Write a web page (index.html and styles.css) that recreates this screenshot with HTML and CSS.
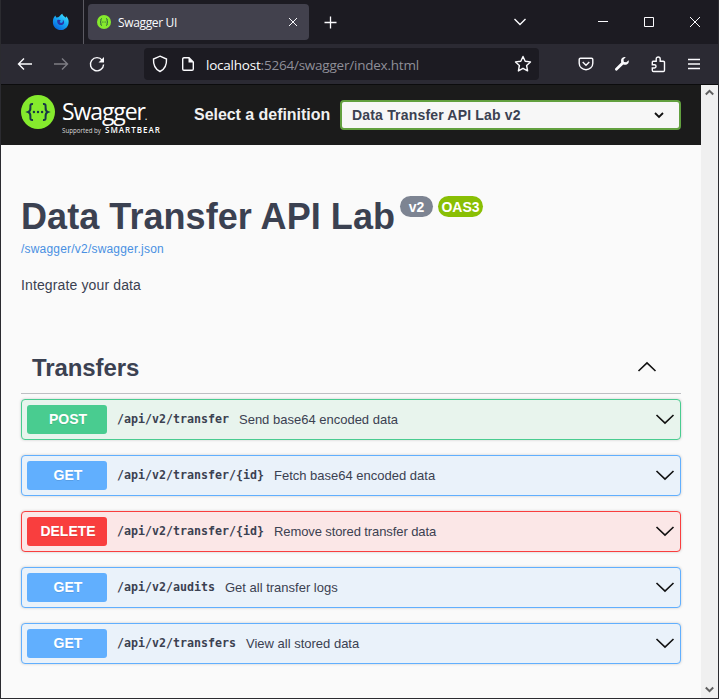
FILE: index.html
```html
<!DOCTYPE html>
<html lang="en">
<head>
<meta charset="utf-8">
<title>Swagger UI</title>
<link rel="stylesheet" href="styles.css">
</head>
<body>
<div class="window">
  <header class="tabbar">
    <svg class="firefox" viewBox="0 0 18 18">
      <defs><linearGradient id="fx" x1="0.9" y1="0" x2="0.2" y2="1"><stop offset="0" stop-color="#45e8ff"/><stop offset="0.5" stop-color="#16a6f5"/><stop offset="1" stop-color="#0560dc"/></linearGradient></defs>
      <path d="M2 4.200 3.300 2.500 4.300 4.500 6.200 4.300C8 3.500 8.400 1.500 10.300.7 10.600 2.500 12.700 3.300 13.500 4.700L14.300 3.300C16.500 5.500 17 8 16.500 10.400 15.700 14.500 12.500 17 8.800 17 4.500 17 1 13.700.9 9.400.8 7.300 1.200 5.500 2 4.200Z" fill="url(#fx)"/>
      <path d="M5.200 7.200C6.500 6.600 8 6.800 8.900 7.700 7.800 8 7.400 8.700 8 9.500 9.200 10.500 11.500 9.700 10.800 6.700 13.200 8.800 12 12.300 8.800 12.100 6.500 12 4.800 9.800 5.200 7.200Z" fill="#2a35a8"/>
    </svg>
    <span class="divider"></span>
    <div class="tab">
      <svg class="favicon" viewBox="0 0 34 34"><use href="#swagger-mark"/></svg>
      <span class="tab-title">Swagger UI</span>
      <svg class="tab-close" viewBox="0 0 10 10"><path d="M1 1 9 9M9 1 1 9"/></svg>
    </div>
    <svg class="new-tab" viewBox="0 0 13 13"><path d="M6.500.5V12.500M.5 6.500H12.500"/></svg>
    <svg class="list-tabs" viewBox="0 0 12 8"><path d="M.5 1 6 6.500 11.500 1"/></svg>
    <svg class="win-btn minimize" viewBox="0 0 10 10"><path d="M0 4.500H10"/></svg>
    <svg class="win-btn maximize" viewBox="0 0 10 10"><path d="M.5.5H9.500V9.500H.5Z"/></svg>
    <svg class="win-btn close" viewBox="0 0 10 10"><path d="M0 0 10 10M10 0 0 10"/></svg>
  </header>

  <nav class="toolbar">
    <svg class="nav-icon" viewBox="0 0 16 16"><path d="M15 8H1.500M7 2.500 1.500 8 7 13.500"/></svg>
    <svg class="nav-icon disabled" viewBox="0 0 16 16"><path d="M1 8H14.500M9 2.500 14.500 8 9 13.500"/></svg>
    <svg class="nav-icon" viewBox="0 0 16 16"><path d="M13.300 4.300A6.600 6.600 0 1 0 14.600 8.500"/><path class="solid" d="M15 1V6.500H9.500Z"/></svg>
    <div class="urlbar">
      <svg class="shield" viewBox="0 0 16 18"><path d="M8 1.200 14.500 4C14.800 9.500 12.800 14.300 8 16.500 3.200 14.300 1.200 9.500 1.500 4Z"/></svg>
      <svg class="doc" viewBox="0 0 14 16"><path d="M3 1.700H8L12.300 6V13A1.300 1.300 0 0 1 11 14.300H3A1.300 1.300 0 0 1 1.700 13V3A1.300 1.300 0 0 1 3 1.700Z"/><path class="solid" d="M7.500 1.500V6.500H12.500Z"/></svg>
      <span class="url"><b>localhost</b>:5264/swagger/index.html</span>
      <svg class="star" viewBox="0 0 18 18"><path d="M9 1.500 11.200 6.300 16.500 6.900 12.600 10.500 13.600 15.900 9 13.300 4.400 15.900 5.400 10.500 1.500 6.900 6.800 6.300Z"/></svg>
    </div>
    <svg class="tool-icon" viewBox="0 0 16 16"><path d="M2.500 2.200H13.500A1.300 1.300 0 0 1 14.800 3.500V7.200A6.800 6.600 0 0 1 1.200 7.200V3.500A1.300 1.300 0 0 1 2.500 2.200ZM4.700 6 8 9.200 11.300 6"/></svg>
    <svg class="tool-icon" viewBox="0 0 16 16"><path class="wrench" d="M14.700 4.200 12.300 6.300 9.900 5.900 9.500 3.600 11.700 1.200C9.600.6 7 2 7 4.700L7.200 6.500 1.200 12.600C.3 13.600 1.900 15.300 3 14.500L9.300 8.500C12.700 9.600 15.400 7.500 14.700 4.200Z"/></svg>
    <svg class="tool-icon" viewBox="0 0 16 16"><path d="M3 5.200H6.200V3A2 2 0 0 1 10.200 3V5.200H13.300A1.200 1.200 0 0 1 14.500 6.400V14.300A1.200 1.200 0 0 1 13.300 15.500H3.500A1.200 1.200 0 0 1 2.300 14.300V12H4.400A1.600 1.600 0 0 0 4.400 8.700H2.300V6Z"/></svg>
    <svg class="tool-icon" viewBox="0 0 16 16"><path d="M2 3.500H14M2 8H14M2 12.500H14"/></svg>
  </nav>

  <div class="viewport">
    <main class="page">
      <div class="topbar">
        <div class="logo">
          <svg class="mark" viewBox="0 0 34 34">
            <g id="swagger-mark">
              <circle cx="17" cy="17" r="17" fill="#85ea2d"/>
              <path d="M12 9C9.200 8.700 9.300 10.200 9.400 12.500 9.500 15 9.300 16.300 7.300 17 9.300 17.700 9.500 19 9.400 21.500 9.300 23.800 9.200 25.300 12 25M22 9C24.800 8.700 24.700 10.200 24.600 12.500 24.500 15 24.700 16.300 26.700 17 24.700 17.700 24.500 19 24.600 21.500 24.700 23.800 24.800 25.300 22 25" fill="none" stroke="#173647" stroke-width="2"/>
              <g fill="#173647"><circle cx="12.900" cy="17" r="1.200"/><circle cx="17" cy="17" r="1.200"/><circle cx="21.100" cy="17" r="1.200"/></g>
            </g>
          </svg>
          <div class="wordmark">
            <div class="brand">Swagger<span class="dot">.</span></div>
            <div class="support"><span class="by">Supported by</span><span class="bear">SMARTBEAR</span></div>
          </div>
        </div>
        <label class="select-label">Select a definition</label>
        <div class="select"><span>Data Transfer API Lab v2</span>
          <svg class="select-arrow" viewBox="0 0 10 7"><path d="M1 1 5 5 9 1"/></svg>
        </div>
      </div>

      <section class="info">
        <h1><span class="name">Data Transfer API Lab</span><span class="badge version">v2</span><span class="badge oas">OAS3</span></h1>
        <a class="spec-link">/swagger/v2/swagger.json</a>
        <p>Integrate your data</p>
      </section>

      <section class="operations">
        <h2><span>Transfers</span><svg class="chevron" viewBox="0 0 20 20"><path d="M1.500 14 10 5.800 18.500 14"/></svg></h2>
        <div class="op post"><span class="method">POST</span><code>/api/v2/transfer</code><span class="desc">Send base64 encoded data</span><svg class="chevron" viewBox="0 0 20 20"><path d="M1.500 6 10 14.200 18.500 6"/></svg></div>
        <div class="op get"><span class="method">GET</span><code>/api/v2/transfer/{id}</code><span class="desc">Fetch base64 encoded data</span><svg class="chevron" viewBox="0 0 20 20"><path d="M1.500 6 10 14.200 18.500 6"/></svg></div>
        <div class="op delete"><span class="method">DELETE</span><code>/api/v2/transfer/{id}</code><span class="desc">Remove stored transfer data</span><svg class="chevron" viewBox="0 0 20 20"><path d="M1.500 6 10 14.200 18.500 6"/></svg></div>
        <div class="op get"><span class="method">GET</span><code>/api/v2/audits</code><span class="desc">Get all transfer logs</span><svg class="chevron" viewBox="0 0 20 20"><path d="M1.500 6 10 14.200 18.500 6"/></svg></div>
        <div class="op get"><span class="method">GET</span><code>/api/v2/transfers</code><span class="desc">View all stored data</span><svg class="chevron" viewBox="0 0 20 20"><path d="M1.500 6 10 14.200 18.500 6"/></svg></div>
      </section>
    </main>
    <aside class="scrollbar">
      <svg viewBox="0 0 9 7"><path d="M.8 5.500 4.500 1.800 8.200 5.500"/></svg>
      <svg viewBox="0 0 9 7"><path d="M.8 1.500 4.500 5.200 8.200 1.500"/></svg>
    </aside>
  </div>
</div>
</body>
</html>
```
FILE: styles.css
```css
* { box-sizing: border-box; }
body { margin: 0; overflow: hidden; font-family: "Liberation Sans", Arial, sans-serif; color: #3b4151; }
svg { display: block; flex: none; fill: none; stroke: #fbfbfe; overflow: visible; }
.window { width: 719px; height: 699px; display: flex; flex-direction: column; border: solid #2b2b30; border-width: 0 1px 1px; background: #fafafa; }

.tabbar { height: 44px; flex: none; display: flex; align-items: center; background: #1c1b22; font-family: "Open Sans", "Noto Sans", sans-serif; }
.firefox { width: 18px; height: 18px; margin-left: 51px; stroke: none; }
.divider { width: 1px; height: 44px; margin-left: 13px; background: #5b5a62; }
.tab { width: 221px; height: 36px; margin-left: 4px; padding: 0 11px 0 9px; display: flex; align-items: center; border-radius: 4px; background: #42414d; color: #fbfbfe; }
.favicon { width: 14px; height: 14px; stroke: none; }
.tab-title { margin-left: 7px; padding-top: 1px; font-size: 12px; letter-spacing: -0.35px; line-height: 16px; }
.tab-close { width: 10px; height: 10px; margin-left: auto; }
.new-tab { width: 13px; height: 13px; margin-left: 15px; stroke-width: 1.3; }
.list-tabs { width: 12px; height: 8px; margin-left: 177px; stroke-width: 1.4; }
.win-btn { width: 10px; height: 10px; margin-left: 36px; }
.minimize { margin-left: 72px; }

.toolbar { height: 41px; flex: none; display: flex; align-items: center; padding-left: 16px; background: #2b2a33; border-bottom: 1px solid #0c0c0d; }
.nav-icon { width: 16px; height: 16px; margin-right: 20px; stroke-width: 1.4; }
.disabled { opacity: .4; }
.solid { fill: #fbfbfe; stroke: none; }
.urlbar { flex: none; width: 395px; height: 32px; margin: 0 39px 0 19px; padding: 0 7px 0 8px; display: flex; align-items: center; border-radius: 4px; background: #1c1b22; font-family: "Open Sans", "Noto Sans", sans-serif; }
.shield { width: 16px; height: 18px; stroke-width: 1.4; }
.doc { width: 14px; height: 16px; margin-left: 13px; stroke-width: 1.4; }
.url { margin-left: 11px; padding-top: 1px; font-size: 13.500px; letter-spacing: -.22px; line-height: 20px; color: #8f8f98; }
.url b { font-weight: 400; color: #fbfbfe; }
.star { width: 18px; height: 18px; margin-left: auto; stroke-width: 1.4; stroke-linejoin: round; }
.tool-icon { width: 16px; height: 16px; margin-right: 20px; stroke-width: 1.4; }
.wrench { fill: #fbfbfe; stroke: none; }

.viewport { flex: 1; min-height: 0; display: flex; }
.page { width: 700px; background: #fafafa; }
.topbar { height: 60px; display: flex; align-items: center; padding: 0 20px; background: #1b1b1b; }
.logo { width: 173px; display: flex; height: 40px; }
.mark { width: 34px; height: 34px; stroke: none; }
.wordmark { margin-left: 7px; color: #fff; font-family: "Open Sans", sans-serif; }
.brand { height: 30px; font-size: 23px; line-height: 32px; font-weight: 400; letter-spacing: -1.1px; }
.dot { font-size: 10px; }
.support { display: flex; align-items: baseline; line-height: 10px; white-space: nowrap; }
.by { width: 43px; font-size: 6.200px; color: #ddd; }
.bear { font-size: 8px; font-weight: 600; letter-spacing: 1px; }
.select-label { width: 146px; font-size: 16px; line-height: 20px; font-weight: 700; letter-spacing: -.04px; color: #f0f0f0; white-space: nowrap; }
.select { width: 341px; height: 30px; padding: 0 15px 0 10px; display: flex; align-items: center; justify-content: space-between; border: 2px solid #62a03f; border-radius: 4px; background: #f7f7f7; font-size: 14px; font-weight: 700; letter-spacing: .18px; }
.select-arrow { width: 10px; height: 7px; stroke: #111; stroke-width: 1.8; }

.info { padding: 50px 20px 0; height: 197px; }
h1 { margin: 0; height: 43px; display: flex; align-items: flex-start; font-size: 36px; line-height: 43px; color: #3b4151; }
.name { letter-spacing: .06px; }
.badge { height: 21px; margin: 1px 0 0 5px; border-radius: 11px; display: flex; align-items: center; justify-content: center; font-size: 14px; line-height: 20px; color: #fff; }
.version { width: 33px; background: #7d8492; }
.oas { width: 45px; background: #89bf04; }
.spec-link { display: block; margin-top: 3px; font-size: 12px; line-height: 16px; letter-spacing: .2px; color: #4990e2; }
p { margin: 20px 0 0; font-size: 14px; line-height: 16px; letter-spacing: .13px; }

.operations { padding: 0 20px; }
h2 { height: 52px; margin: 0 0 5px; padding: 0 24px 0 11px; display: flex; align-items: center; justify-content: space-between; border-bottom: 1px solid #bdbfc3; font-size: 24px; letter-spacing: -.1px; }
.chevron { width: 20px; height: 20px; margin-bottom: 1px; stroke: #111; stroke-width: 1.6; }
.op { height: 41px; margin-bottom: 15px; padding: 0 5px; display: flex; align-items: center; border: 1px solid; border-radius: 4px; box-shadow: 0 0 3px rgba(0,0,0,.19); }
.method { width: 80px; height: 29px; padding-left: 2px; border-radius: 3px; color: #fff; font-size: 14px; line-height: 29px; font-weight: 700; text-align: center; text-shadow: 0 1px 0 rgba(0,0,0,.1); }
code { margin: 0 0 1px 10px; font: 700 11.630px/16px "DejaVu Sans Mono", monospace; }
.desc { margin-left: 10px; font-size: 13px; line-height: 16px; }
.op .chevron { margin-left: auto; }
.post { border-color: #49cc90; background: #e8f4ed; }
.post .method { background: #49cc90; }
.get { border-color: #61affe; background: #eaf2fa; }
.get .method { background: #61affe; }
.delete { border-color: #f93e3e; background: #fbe7e7; }
.delete .method { background: #f93e3e; }
.delete .desc { letter-spacing: -.1px; }

.scrollbar { width: 17px; display: flex; flex-direction: column; align-items: center; justify-content: space-between; padding: 4px 0 5px; background: #f0f0f0; }
.scrollbar svg { width: 9px; height: 7px; stroke: #606060; stroke-width: 2; }
```
